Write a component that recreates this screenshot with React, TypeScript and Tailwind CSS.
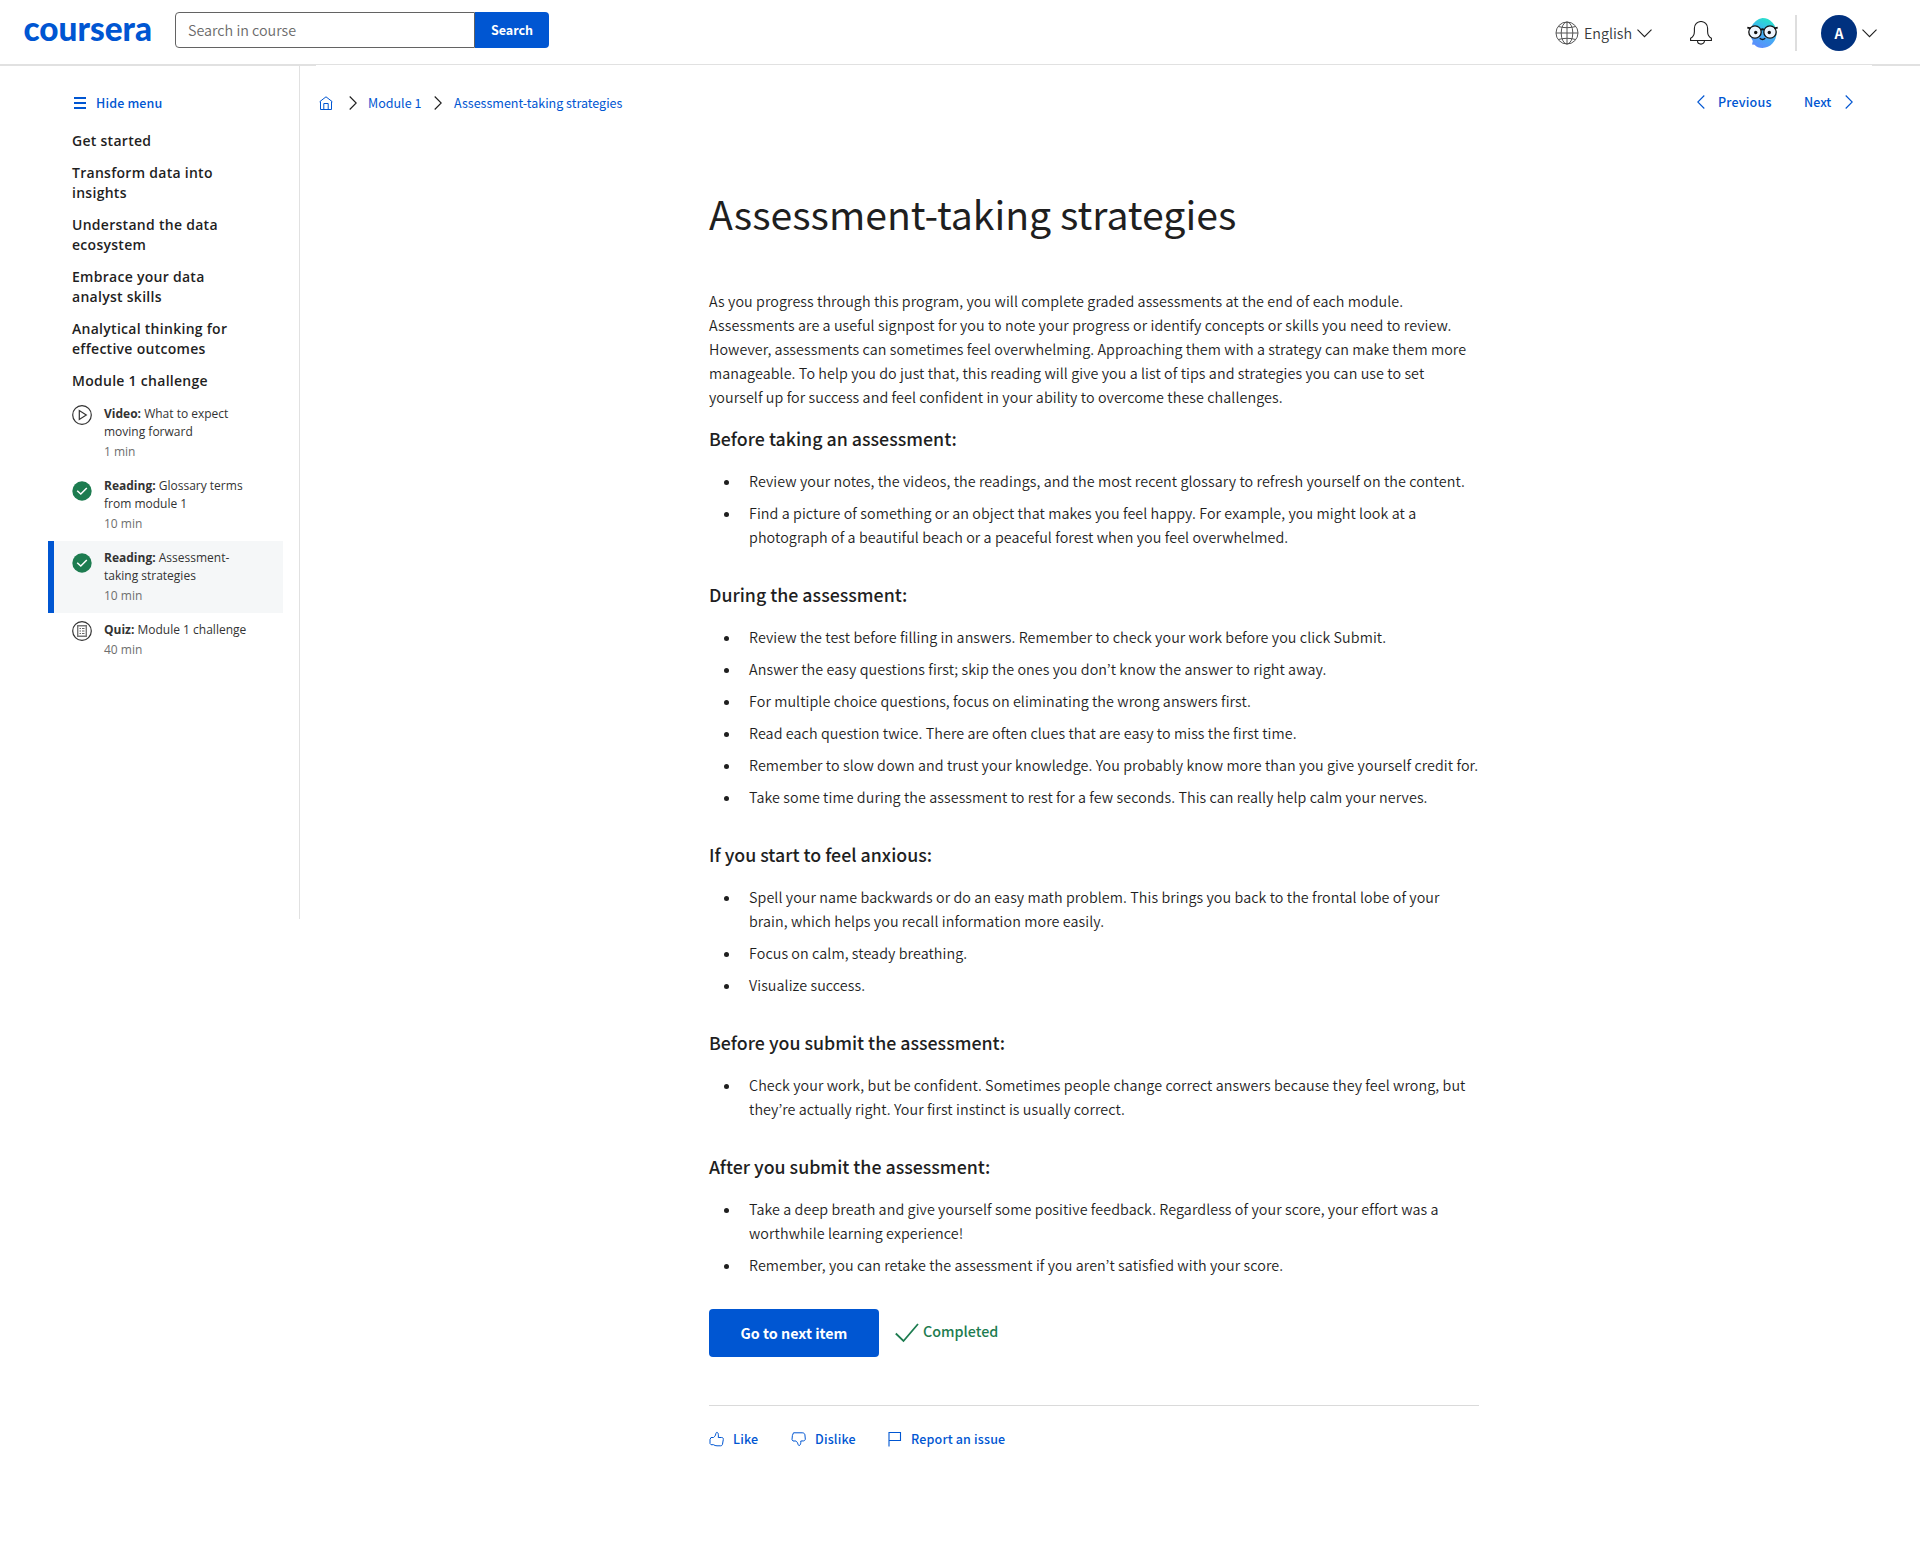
import React from "react";

const blue = "text-[#0056d2]";

function Chevron({ className, d, w, h, sw = 1.1 }: { className?: string; d: string; w: number; h: number; sw?: number }) {
  return (
    <svg className={className} width={w} height={h} viewBox={`0 0 ${w} ${h}`} fill="none" stroke="currentColor" strokeWidth={sw}>
      <path d={d} />
    </svg>
  );
}

const RIGHT = "M.7.5 7.2 7 .7 13.5";
const LEFT = "M7.3.5.8 7l6.500 6.500";
const DOWN = "M.5.7 7.5 7.7 14.5.7";

function Logo() {
  return (
    <svg className="ml-5 shrink-0 overflow-visible" width="136" height="64" viewBox="0 0 136 64">
      <text x="3.500" y="41.300" textLength="128.500" lengthAdjust="spacingAndGlyphs" fontFamily="Lato, sans-serif" fontWeight="900" fontSize="33.500" fill="#0056d2">
        coursera
      </text>
    </svg>
  );
}

function Header() {
  return (
    <header className="flex h-[65px] items-start border-b border-[#e1e1e1]">
      <Logo />
      <div className="mt-3 ml-[19px] flex h-9 w-[374px]">
        <div className="flex h-9 w-[300px] items-center rounded-l-[4px] border border-[#636363] pl-3 text-[14.32px] leading-5 font-[350] text-[#6b6b6b]">
          Search in course
        </div>
        <div className="flex h-9 w-[74px] items-center justify-center rounded-r-[4px] bg-[#0056d2] text-[12.53px] leading-4 font-bold text-white">
          Search
        </div>
      </div>
      <div className="ml-auto flex h-[66px] items-center pr-[43px]">
        <svg width="24" height="24" viewBox="0 0 24 24" fill="none" stroke="#555" strokeWidth="1">
          <circle cx="12" cy="12" r="11" />
          <ellipse cx="12" cy="12" rx="5.800" ry="11" />
          <path d="M12 1v22M1 12h22M3.500 5.500c5 1.600 12 1.600 17 0M3.500 18.500c5-1.600 12-1.600 17 0" />
        </svg>
        <span className="ml-[5px] w-[48px] text-[14.32px] font-[350] whitespace-nowrap text-[#373a3c]">English</span>
        <Chevron className="ml-[5px] text-[#1f1f1f]" d={DOWN} w={15} h={9} />
        <svg className="ml-[38px]" width="22" height="24" viewBox="0 0 22 24" fill="none" stroke="#1f1f1f" strokeWidth="1.100">
          <path d="M.6 19.500V17.300C3.200 15.800 4.400 14 4.400 10.500V7.300a6.600 6.800 0 0 1 13.200 0v3.200c0 3.500 1.200 5.300 3.800 6.800v2.200z" />
          <path d="M7.500 19.800a3.500 3.300 0 0 0 7 0" />
        </svg>
        <svg className="ml-[35px]" width="31" height="30" viewBox="0 0 31 30">
          <defs>
            <linearGradient id="face" x1=".8" y1="0" x2=".4" y2="1">
              <stop offset="0" stopColor="#26e8c4" />
              <stop offset=".45" stopColor="#3bb8f0" />
              <stop offset="1" stopColor="#5b8dfc" />
            </linearGradient>
          </defs>
          <path d="M15.500 0a13.500 14.500 0 0 1 0 30c-3.500 0-6-1-8-3.200l-2.500-.3.800-3.500A15 15 0 0 1 15.500 0z" fill="url(#face)" />
          <g stroke="#111" strokeWidth="1.300">
            <circle cx="8" cy="14" r="6.200" fill="#eef5fe" />
            <circle cx="23" cy="14" r="6.200" fill="#eef5fe" />
            <path d="M14 12q1.500-1.400 3 0M.3 9.600l3.500.8M30.700 9.600l-3.500.8" fill="none" strokeWidth="1.800" />
            <path d="M12.700 20.300q2.800 2.400 5.600 0" fill="none" />
          </g>
          <circle cx="8.700" cy="14.500" r="1.700" fill="#111" />
          <circle cx="22.300" cy="14.500" r="1.700" fill="#111" />
        </svg>
        <div className="ml-[17px] h-9 w-[2px] bg-[#dedede]" />
        <div className="ml-6 flex h-9 w-9 items-center justify-center rounded-full bg-[#00317f] text-[14px] font-bold text-white">A</div>
        <Chevron className="ml-[5px] text-[#1f1f1f]" d={DOWN} w={15} h={9} />
      </div>
    </header>
  );
}

const modules: string[][] = [
  ["Get started"],
  ["Transform data into", "insights"],
  ["Understand the data", "ecosystem"],
  ["Embrace your data", "analyst skills"],
  ["Analytical thinking for", "effective outcomes"],
  ["Module 1 challenge"],
];

function Lines({ lines }: { lines: string[] }) {
  return (
    <>
      {lines.map((l) => (
        <span key={l} className="block whitespace-nowrap">
          {l}
        </span>
      ))}
    </>
  );
}

function PlayIcon() {
  return (
    <svg width="20" height="20" viewBox="0 0 20 20" fill="none" stroke="#333" strokeWidth="1.200">
      <circle cx="10" cy="10" r="9.300" />
      <path d="M7.300 5.500v9l7-4.500z" />
    </svg>
  );
}
function CheckIcon() {
  return (
    <svg width="20" height="20" viewBox="0 0 20 20" fill="none">
      <circle cx="10" cy="10" r="9.700" fill="#1d7c50" />
      <path d="M5.200 9.700 8.800 13l6-6" stroke="#fff" strokeWidth="1.500" />
    </svg>
  );
}
function QuizIcon() {
  return (
    <svg width="20" height="20" viewBox="0 0 20 20" fill="none" stroke="#333">
      <circle cx="10" cy="10" r="9.300" strokeWidth="1.200" />
      <path d="M5.700 4.700h8.600v10.600H5.700z" stroke="#777" strokeWidth="1.400" />
      <path d="M7.500 7.500h1.500M7.500 10h1.500M7.500 12.500h1.500M10 7.500h2.500M10 10h2.500M10 12.500h2.500" stroke="#666" />
    </svg>
  );
}

type Item = { icon: React.ReactNode; kind: string; first: string; rest?: string; time: string; active?: boolean; done?: boolean };
const items: Item[] = [
  { icon: <PlayIcon />, kind: "Video:", first: "What to expect", rest: "moving forward", time: "1 min" },
  { icon: <CheckIcon />, kind: "Reading:", first: "Glossary terms", rest: "from module 1", time: "10 min", done: true },
  { icon: <CheckIcon />, kind: "Reading:", first: "Assessment-", rest: "taking strategies", time: "10 min", active: true, done: true },
  { icon: <QuizIcon />, kind: "Quiz:", first: "Module 1 challenge", time: "40 min" },
];

function Sidebar() {
  return (
    <aside className="h-[854px] w-[300px] shrink-0 border-r border-[#e1e1e1] pl-12">
      <div className="flex h-[60px] items-center pt-[16px] pl-[26px]">
        <div className="flex w-3 flex-col gap-[3px]">
          <div className="h-[2px] bg-[#0056d2]" />
          <div className="h-[2px] bg-[#0056d2]" />
          <div className="h-[2px] bg-[#0056d2]" />
        </div>
        <span className="ml-[10px] text-[12.53px] font-medium tracking-[0.15px] whitespace-nowrap text-[#0056d2]">Hide menu</span>
      </div>
      <nav className="font-['Open_Sans',sans-serif]">
        {modules.map((m) => (
          <div key={m[0]} className="py-1.5 pl-6 text-[14px] leading-5 font-semibold tracking-[0.28px] text-[#1f1f1f]">
            <Lines lines={m} />
          </div>
        ))}
        {items.map((it) => (
          <div
            key={it.kind + it.first}
            className={
              it.active
                ? "flex w-[235px] border-l-[6px] border-[#0056d2] bg-[#f5f7f8] py-2 pl-[18px]"
                : "flex w-[235px] py-2 pl-6"
            }
          >
            <div className={it.done ? "mt-1 w-8 shrink-0" : "w-8 shrink-0"}>{it.icon}</div>
            <div className="text-[12px] leading-[18px] whitespace-nowrap text-[#333]">
              <div>
                <b className="font-bold">{it.kind}</b> {it.first}
              </div>
              {it.rest && <div>{it.rest}</div>}
              <div className="mt-[2px] text-[#6e6e6e]">{it.time}</div>
            </div>
          </div>
        ))}
      </nav>
    </aside>
  );
}

const sections: { title: string; bullets: string[][] }[] = [
  {
    title: "Before taking an assessment:",
    bullets: [
      ["Review your notes, the videos, the readings, and the most recent glossary to refresh yourself on the content."],
      ["Find a picture of something or an object that makes you feel happy. For example, you might look at a", "photograph of a beautiful beach or a peaceful forest when you feel overwhelmed."],
    ],
  },
  {
    title: "During the assessment:",
    bullets: [
      ["Review the test before filling in answers. Remember to check your work before you click Submit."],
      ["Answer the easy questions first; skip the ones you don’t know the answer to right away."],
      ["For multiple choice questions, focus on eliminating the wrong answers first."],
      ["Read each question twice. There are often clues that are easy to miss the first time."],
      ["Remember to slow down and trust your knowledge. You probably know more than you give yourself credit for."],
      ["Take some time during the assessment to rest for a few seconds. This can really help calm your nerves."],
    ],
  },
  {
    title: "If you start to feel anxious:",
    bullets: [
      ["Spell your name backwards or do an easy math problem. This brings you back to the frontal lobe of your", "brain, which helps you recall information more easily."],
      ["Focus on calm, steady breathing."],
      ["Visualize success."],
    ],
  },
  {
    title: "Before you submit the assessment:",
    bullets: [["Check your work, but be confident. Sometimes people change correct answers because they feel wrong, but", "they’re actually right. Your first instinct is usually correct."]],
  },
  {
    title: "After you submit the assessment:",
    bullets: [
      ["Take a deep breath and give yourself some positive feedback. Regardless of your score, your effort was a", "worthwhile learning experience!"],
      ["Remember, you can retake the assessment if you aren’t satisfied with your score."],
    ],
  },
];

const intro = [
  "As you progress through this program, you will complete graded assessments at the end of each module.",
  "Assessments are a useful signpost for you to note your progress or identify concepts or skills you need to review.",
  "However, assessments can sometimes feel overwhelming. Approaching them with a strategy can make them more",
  "manageable. To help you do just that, this reading will give you a list of tips and strategies you can use to set",
  "yourself up for success and feel confident in your ability to overcome these challenges.",
];

function Article() {
  return (
    <article className="ml-[409px] w-[770px] pt-[46px] text-[14.32px] leading-6 text-[#1f1f1f]">
      <h1 className="h-[52px] text-[39.2px] leading-[52px] font-normal whitespace-nowrap">Assessment-taking strategies</h1>
      <div className="mt-[50px] font-[350] tracking-[0.08px]">
        <Lines lines={intro} />
      </div>
      {sections.map((s, i) => (
        <section key={s.title} className={i === 0 ? "pt-[15px]" : "pt-[31px]"}>
          <h2 className="h-7 text-[17.8px] leading-7 font-medium whitespace-nowrap">{s.title}</h2>
          <ul className="flex flex-col gap-2 pt-[17px] font-[350] tracking-[0.08px]">
            {s.bullets.map((b) => (
              <li key={b[0]} className="flex">
                <span className="mt-[11px] mr-[20px] ml-[15px] h-[5px] w-[5px] shrink-0 rounded-full bg-[#1f1f1f]" />
                <div>
                  <Lines lines={b} />
                </div>
              </li>
            ))}
          </ul>
        </section>
      ))}
      <div className="mt-8 flex items-center">
        <button className="h-12 w-[170px] rounded-[4px] bg-[#0056d2] text-[14.32px] font-bold text-white">Go to next item</button>
        <svg className="ml-4" width="24" height="20" viewBox="0 0 24 20" fill="none" stroke="#1d7c50" strokeWidth="1.800">
          <path d="M.8 10.500 8.500 18 23 1" />
        </svg>
        <span className="ml-[4px] pb-1 font-medium text-[#1d7c50]">Completed</span>
      </div>
      <div className="mt-12 border-t border-[#dadada]" />
      <div className={`mt-[21px] flex items-center text-[12.53px] font-medium tracking-[0.16px] ${blue}`}>
        <svg width="16" height="16" viewBox="0 0 16 16" fill="none" stroke="currentColor" strokeWidth="1">
          <path d="M4.500 13.700c1 .7 2 1.100 3.500 1.100h3.500c1.200 0 1.800-.6 2-1.600l.8-4.700c.2-1.400-.5-2-1.700-2H9.300c.2-2 .2-4.600-1-5.100-.9-.3-1.300.5-1.500 1.500-.3 1.800-1 2.600-2.300 3.600M4.500 6.500 2 6.500 1 8.500v4l1 1.200h2.500" />
        </svg>
        <span className="ml-2 w-[26px]">Like</span>
        <svg className="ml-8" width="16" height="16" viewBox="0 0 16 16" fill="none" stroke="currentColor" strokeWidth="1">
          <path d="M2.500 1.800h8.700c1.300 0 2.500.6 2.700 1.900l.4 4.300c0 1-.6 1.600-1.600 1.900L9.800 10c.2 1.800-.3 4-1.300 4.500-.8.300-1.200-.4-1.500-1.300C6.500 11.500 6 10.800 5 10H2L1 8.500l.4-4z" />
        </svg>
        <span className="ml-2 w-[42px]">Dislike</span>
        <svg className="ml-[30px]" width="16" height="16" viewBox="0 0 16 16" fill="none" stroke="currentColor" strokeWidth="1.100">
          <path d="M2 15.500v-14h11.500v8H2" />
        </svg>
        <span className="ml-[8px]">Report an issue</span>
      </div>
    </article>
  );
}

export default function App() {
  return (
    <div className="h-[1552px] w-[1920px] overflow-hidden bg-white font-['Noto_Sans_CJK_KR',sans-serif] text-[#1f1f1f]">
      <Header />
      <div className="-mb-px flex h-px justify-between">
        <div className="w-[316px] bg-[#e1e1e1]" />
        <div className="w-[48px] bg-[#e1e1e1]" />
      </div>
      <div className="flex">
        <Sidebar />
        <div className="w-[1620px]">
          <div className={`flex h-[76px] items-center text-[12.53px] ${blue}`}>
            <svg className="ml-[19px]" width="14" height="14" viewBox="0 0 14 14" fill="none" stroke="currentColor">
              <path d="M.6 5.800 7 .8l6.400 5M1.500 5.500v8h11v-8M4.800 13.300V7.500h4.400v5.800" />
            </svg>
            <Chevron className="ml-4 text-[#1f1f1f]" d={RIGHT} w={8} h={14} />
            <span className="ml-[11px] w-[54px] whitespace-nowrap">Module 1</span>
            <Chevron className="ml-[12px] text-[#1f1f1f]" d={RIGHT} w={8} h={14} />
            <span className="ml-[12px] whitespace-nowrap">Assessment-taking strategies</span>
            <div className="mr-[67px] mb-[2px] ml-auto flex items-center font-medium">
              <Chevron d={LEFT} w={8} h={14} />
              <span className="ml-[13px] w-[54px] tracking-[0.2px]">Previous</span>
              <span className="ml-[32px] w-[29px]">Next</span>
              <Chevron className="ml-[12px]" d={RIGHT} w={8} h={14} />
            </div>
          </div>
          <Article />
        </div>
      </div>
    </div>
  );
}
